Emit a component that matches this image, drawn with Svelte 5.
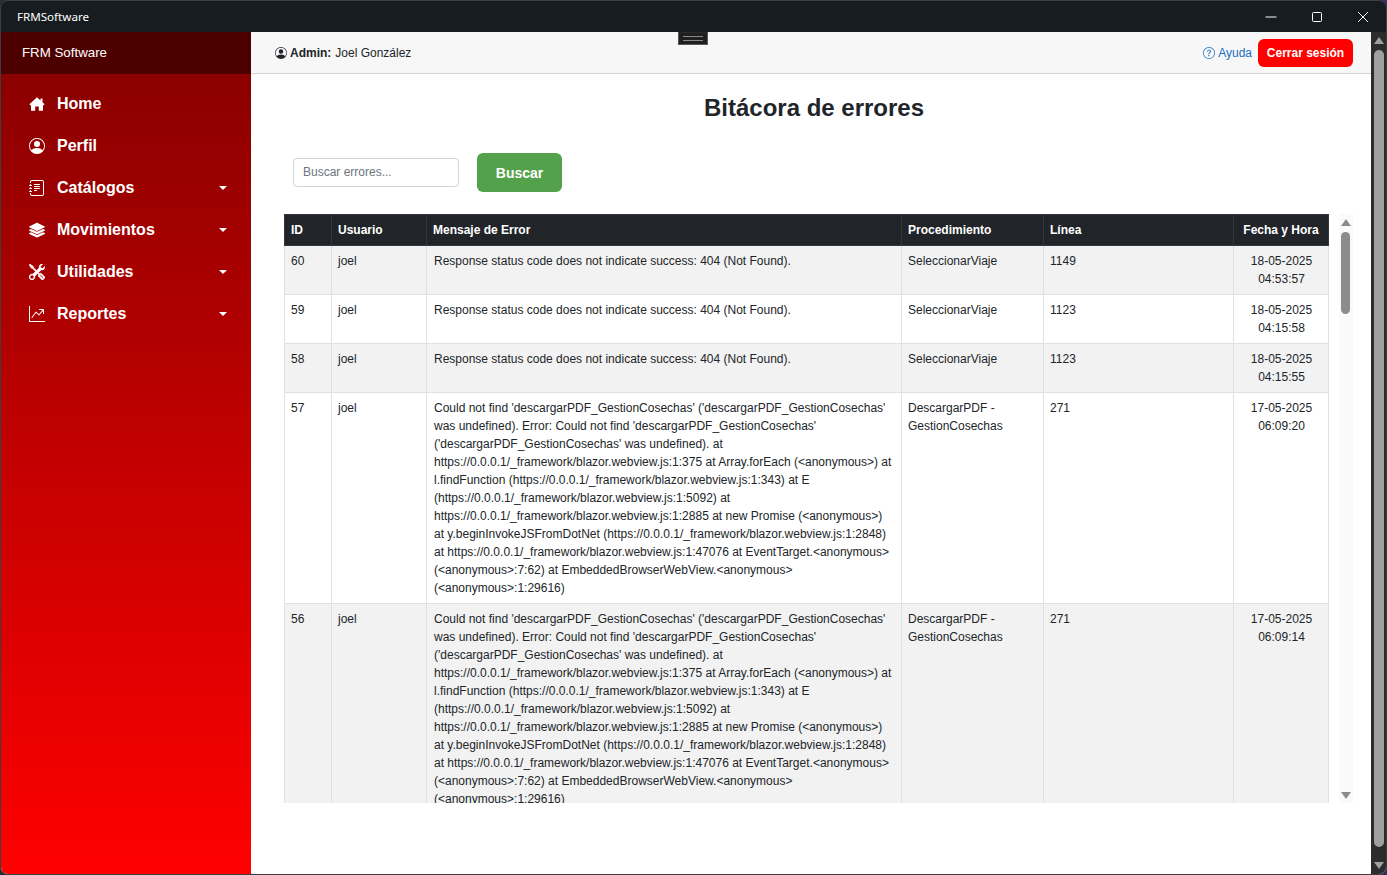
<script>
  const nav = [
    { label: 'Home', icon: 'home', caret: false },
    { label: 'Perfil', icon: 'person', caret: false },
    { label: 'Catálogos', icon: 'journal', caret: true },
    { label: 'Movimientos', icon: 'layers', caret: true },
    { label: 'Utilidades', icon: 'tools', caret: true },
    { label: 'Reportes', icon: 'graph', caret: true }
  ];
  const notFound = 'Response status code does not indicate success: 404 (Not Found).';
  const jsError = "Could not find 'descargarPDF_GestionCosechas' ('descargarPDF_GestionCosechas' was undefined). Error: Could not find 'descargarPDF_GestionCosechas' ('descargarPDF_GestionCosechas' was undefined). at https://0.0.0.1/_framework/blazor.webview.js:1:375 at Array.forEach (<anonymous>) at l.findFunction (https://0.0.0.1/_framework/blazor.webview.js:1:343) at E (https://0.0.0.1/_framework/blazor.webview.js:1:5092) at https://0.0.0.1/_framework/blazor.webview.js:1:2885 at new Promise (<anonymous>) at y.beginInvokeJSFromDotNet (https://0.0.0.1/_framework/blazor.webview.js:1:2848) at https://0.0.0.1/_framework/blazor.webview.js:1:47076 at EventTarget.<anonymous> (<anonymous>:7:62) at EmbeddedBrowserWebView.<anonymous> (<anonymous>:1:29616)";
  const rows = [
    { id: 60, user: 'joel', msg: notFound, proc: 'SeleccionarViaje', line: 1149, date: '18-05-2025', time: '04:53:57' },
    { id: 59, user: 'joel', msg: notFound, proc: 'SeleccionarViaje', line: 1123, date: '18-05-2025', time: '04:15:58' },
    { id: 58, user: 'joel', msg: notFound, proc: 'SeleccionarViaje', line: 1123, date: '18-05-2025', time: '04:15:55' },
    { id: 57, user: 'joel', msg: jsError, proc: 'DescargarPDF - GestionCosechas', line: 271, date: '17-05-2025', time: '06:09:20' },
    { id: 56, user: 'joel', msg: jsError, proc: 'DescargarPDF - GestionCosechas', line: 271, date: '17-05-2025', time: '06:09:14' }
  ];
</script>

{#snippet personIcon()}
  <path d="M11 6a3 3 0 1 1-6 0 3 3 0 0 1 6 0" />
  <path fill-rule="evenodd" d="M0 8a8 8 0 1 1 16 0A8 8 0 0 1 0 8m8-7a7 7 0 0 0-5.468 11.37C3.242 11.226 4.805 10 8 10s4.757 1.225 5.468 2.37A7 7 0 0 0 8 1" />
{/snippet}

<div class="window">
  <header class="titlebar">
    <span class="apptitle">FRMSoftware</span>
    <div class="controls">
      <span class="ctl"><svg width="12" height="12" viewBox="0 0 12 12"><path d="M0.5 6h11" stroke="#fff" /></svg></span>
      <span class="ctl"><svg width="12" height="12" viewBox="0 0 12 12"><rect x="1.5" y="1.5" width="9" height="9" rx="1" fill="none" stroke="#fff" /></svg></span>
      <span class="ctl"><svg width="12" height="12" viewBox="0 0 12 12"><path d="M1 1l10 10M11 1L1 11" stroke="#fff" /></svg></span>
    </div>
  </header>

  <div class="handle"><span></span></div>

  <div class="viewport">
    <aside class="sidebar">
      <div class="brand">FRM Software</div>
      <nav class="nav">
        {#each nav as item}
          <div class="navitem">
            <svg class="navicon" viewBox="0 0 16 16" fill="currentColor">
              {#if item.icon === 'home'}
                <path d="M8 1.2 11.5 4.4V2.5h2V6.3L15.6 8.2 14.3 9.5 14 9.2V14.8H9.8V10.5H6.2V14.8H2V9.2L1.7 9.5.4 8.2z" />
              {:else if item.icon === 'person'}
                {@render personIcon()}
              {:else if item.icon === 'journal'}
                <path d="M5 10.5a.5.5 0 0 1 .5-.5h2a.5.5 0 0 1 0 1h-2a.5.5 0 0 1-.5-.5m0-2a.5.5 0 0 1 .5-.5h5a.5.5 0 0 1 0 1h-5a.5.5 0 0 1-.5-.5m0-2a.5.5 0 0 1 .5-.5h5a.5.5 0 0 1 0 1h-5a.5.5 0 0 1-.5-.5m0-2a.5.5 0 0 1 .5-.5h5a.5.5 0 0 1 0 1h-5a.5.5 0 0 1-.5-.5" />
                <path d="M3 0h10a2 2 0 0 1 2 2v12a2 2 0 0 1-2 2H3a2 2 0 0 1-2-2v-1h1v1a1 1 0 0 0 1 1h10a1 1 0 0 0 1-1V2a1 1 0 0 0-1-1H3a1 1 0 0 0-1 1v1H1V2a2 2 0 0 1 2-2" />
                <path d="M1 5v-.5a.5.5 0 0 1 1 0V5h.5a.5.5 0 0 1 0 1h-2a.5.5 0 0 1 0-1zm0 3v-.5a.5.5 0 0 1 1 0V8h.5a.5.5 0 0 1 0 1h-2a.5.5 0 0 1 0-1zm0 3v-.5a.5.5 0 0 1 1 0v.5h.5a.5.5 0 0 1 0 1h-2a.5.5 0 0 1 0-1z" />
              {:else if item.icon === 'layers'}
                <path d="M7.765 .8a.5.5 0 0 1 .47 0l7.5 3.6a.5.5 0 0 1 0 .9l-7.5 3.6a.5.5 0 0 1-.47 0l-7.5-3.6a.5.5 0 0 1 0-.9z" />
                <path d="M2 6.9.265 7.75a.5.5 0 0 0 0 .9l7.5 3.6a.5.5 0 0 0 .47 0l7.5-3.6a.5.5 0 0 0 0-.9L14 6.9 8.6 9.5a1.4 1.4 0 0 1-1.2 0z" />
                <path d="M2 10.2.265 11.05a.5.5 0 0 0 0 .9l7.5 3.6a.5.5 0 0 0 .47 0l7.5-3.6a.5.5 0 0 0 0-.9L14 10.2l-5.4 2.6a1.4 1.4 0 0 1-1.2 0z" />
              {:else if item.icon === 'tools'}
                <path stroke="currentColor" stroke-width=".4" d="M1 0 0 1l2.2 3.081a1 1 0 0 0 .815.419h.07a1 1 0 0 1 .708.293l2.675 2.675-2.617 2.654A3.003 3.003 0 0 0 0 13a3 3 0 1 0 5.878-.851l2.654-2.617.968.968-.305.914a1 1 0 0 0 .242 1.023l3.27 3.27a.997.997 0 0 0 1.414 0l1.586-1.586a.997.997 0 0 0 0-1.414l-3.27-3.27a1 1 0 0 0-1.023-.242L10.5 9.5l-.96-.96 2.68-2.643A3.005 3.005 0 0 0 16 3q0-.405-.102-.777l-2.14 2.141L12 4l-.364-1.757L13.777.102a3 3 0 0 0-3.675 3.68L7.462 6.46 4.793 3.793a1 1 0 0 1-.293-.707v-.071a1 1 0 0 0-.419-.814zm9.646 10.646a.5.5 0 0 1 .708 0l2.914 2.915a.456.456 0 0 1-.645.645l-2.915-2.914a.5.5 0 0 1-.062-.646zM3 11l.471.242.529.026.287.445.445.287.026.529L5 13l-.242.471-.026.529-.445.287-.287.445-.529.026L3 15l-.471-.242L2 14.732l-.287-.445L1.268 14l-.026-.529L1 13l.242-.471.026-.529.445-.287.287-.445.529-.026z" />
              {:else}
                <path fill-rule="evenodd" d="M0 0h1v15h15v1H0zm10 3.5a.5.5 0 0 1 .5-.5h4a.5.5 0 0 1 .5.5v4a.5.5 0 0 1-1 0V4.9l-3.613 4.417a.5.5 0 0 1-.74.037L7.06 6.767l-3.656 5.027a.5.5 0 0 1-.808-.588l4-5.5a.5.5 0 0 1 .758-.06l2.609 2.61L13.445 4H10.5a.5.5 0 0 1-.5-.5" />
              {/if}
            </svg>
            <span class="navlabel">{item.label}</span>
            {#if item.caret}<span class="caret"></span>{/if}
          </div>
        {/each}
      </nav>
    </aside>

    <main class="main">
      <div class="topbar">
        <div class="who">
          <svg class="whoicon" viewBox="0 0 16 16" fill="currentColor">{@render personIcon()}</svg>
          <b>Admin:</b> <span class="whoname">Joel González</span>
        </div>
        <div class="actions">
          <a class="help" href="#ayuda">
            <svg class="helpicon" viewBox="0 0 16 16" fill="currentColor">
              <path d="M8 15A7 7 0 1 1 8 1a7 7 0 0 1 0 14m0 1A8 8 0 1 0 8 0a8 8 0 0 0 0 16" />
              <path d="M5.255 5.786a.237.237 0 0 0 .241.247h.825c.138 0 .248-.113.266-.25.09-.656.54-1.134 1.342-1.134.686 0 1.314.343 1.314 1.168 0 .635-.374.927-.965 1.371-.673.489-1.206 1.06-1.168 1.987l.003.217a.25.25 0 0 0 .25.246h.811a.25.25 0 0 0 .25-.25v-.105c0-.718.273-.927 1.01-1.486.609-.463 1.244-.977 1.244-2.056 0-1.511-1.276-2.241-2.673-2.241-1.267 0-2.655.59-2.75 2.286m1.557 5.763c0 .533.425.927 1.01.927.609 0 1.028-.394 1.028-.927 0-.552-.42-.94-1.029-.94-.584 0-1.009.388-1.009.94" />
            </svg>
            Ayuda
          </a>
          <button class="logout">Cerrar sesión</button>
        </div>
      </div>

      <div class="content">
        <h1 class="title">Bitácora de errores</h1>
        <div class="search">
          <input class="searchinput" placeholder="Buscar errores..." />
          <button class="searchbtn">Buscar</button>
        </div>
        <div class="tablewrap">
          <div class="tablescroll">
            <table class="grid">
              <colgroup>
                <col class="c-id" /><col class="c-user" /><col class="c-msg" /><col class="c-proc" /><col class="c-line" /><col class="c-date" />
              </colgroup>
              <thead>
                <tr>
                  <th>ID</th><th>Usuario</th><th>Mensaje de Error</th><th>Procedimiento</th><th>Línea</th><th class="center">Fecha y Hora</th>
                </tr>
              </thead>
              <tbody>
                {#each rows as r}
                  <tr>
                    <td>{r.id}</td>
                    <td>{r.user}</td>
                    <td class="msg">{r.msg}</td>
                    <td>{r.proc}</td>
                    <td>{r.line}</td>
                    <td class="center">{r.date}<br />{r.time}</td>
                  </tr>
                {/each}
              </tbody>
            </table>
          </div>
          <div class="vbar inner">
            <span class="up"></span>
            <span class="thumb"></span>
            <span class="down"></span>
          </div>
        </div>
      </div>
    </main>

    <div class="vbar outer">
      <span class="up"></span>
      <span class="thumb"></span>
      <span class="down"></span>
    </div>
  </div>
</div>

<style>
  :global(body) {
    margin: 0;
    background: linear-gradient(90deg, #2a2c2e 0 72%, #3c2a66 72% 100%);
    overflow: hidden;
  }
  .window {
    position: relative;
    box-sizing: border-box;
    height: 875px;
    width: 1387px;
    border: 1px solid #3c3e40;
    border-radius: 8px;
    overflow: hidden;
    display: flex;
    flex-direction: column;
    font-family: "Liberation Sans", Arial, sans-serif;
    color: #212529;
  }
  .titlebar {
    height: 31px;
    flex: none;
    background: #171c20;
    display: flex;
    align-items: center;
    justify-content: space-between;
    padding-left: 16px;
  }
  .apptitle {
    font-family: "Noto Sans", "Open Sans", sans-serif;
    font-size: 11.6px;
    color: #fff;
  }
  .controls {
    display: flex;
  }
  .ctl {
    width: 46px;
    height: 31px;
    display: flex;
    align-items: center;
    justify-content: center;
  }
  .handle {
    position: absolute;
    top: 31px;
    left: 677px;
    box-sizing: border-box;
    width: 30px;
    height: 13px;
    background: #1f1f1f;
    border: 1px solid #595959;
    border-top-color: #2a2a2a;
    display: flex;
    align-items: center;
    justify-content: center;
    z-index: 3;
  }
  .handle span {
    width: 20px;
    height: 3px;
    border-top: 1px solid #8a8a8a;
    border-bottom: 1px solid #8a8a8a;
  }
  .viewport {
    flex: 1;
    min-height: 0;
    display: flex;
    overflow: hidden;
    background: #fff;
  }
  .sidebar {
    flex: none;
    width: 250px;
    display: flex;
    flex-direction: column;
    color: #fff;
  }
  .brand {
    flex: none;
    box-sizing: border-box;
    height: 42px;
    display: flex;
    align-items: center;
    padding: 0 0 2px 21px;
    background: #4d0000;
    font-size: 13.3px;
  }
  .nav {
    flex: 1;
    padding-top: 9px;
    background: linear-gradient(180deg, #8b0000 0%, #ff0000 100%);
  }
  .navitem {
    height: 42px;
    display: flex;
    align-items: center;
    padding-left: 28px;
    font-size: 16px;
    font-weight: 700;
  }
  .navicon {
    width: 16px;
    height: 16px;
    flex: none;
  }
  .navlabel {
    margin-left: 12px;
    flex: 1;
  }
  .caret {
    width: 0;
    height: 0;
    margin-right: 24px;
    border-left: 4px solid transparent;
    border-right: 4px solid transparent;
    border-top: 4px solid #fff;
  }
  .main {
    flex: 1;
    min-width: 0;
  }
  .topbar {
    box-sizing: border-box;
    height: 42px;
    background: #f7f7f7;
    border-bottom: 1px solid #d6d5d5;
    display: flex;
    align-items: center;
    justify-content: space-between;
    padding: 0 18px 0 24px;
    font-size: 12px;
  }
  .who {
    display: flex;
    align-items: center;
    gap: 3px;
  }
  .whoname {
    margin-left: 1px;
  }
  .whoicon {
    width: 12px;
    height: 12px;
  }
  .actions {
    display: flex;
    align-items: center;
    gap: 6px;
  }
  .help {
    display: flex;
    align-items: center;
    gap: 3px;
    color: #1b6ec2;
    text-decoration: none;
  }
  .helpicon {
    width: 12px;
    height: 12px;
  }
  .logout {
    box-sizing: border-box;
    width: 95px;
    height: 28px;
    background: #ff0000;
    color: #fff;
    border: 0;
    border-radius: 6px;
    font: 700 12px "Liberation Sans", Arial, sans-serif;
  }
  .content {
    padding: 0 18px 0 33px;
  }
  .title {
    margin: 19px 9px 0 0;
    text-align: center;
    font-size: 24px;
    line-height: 29px;
    font-weight: 700;
  }
  .search {
    display: flex;
    align-items: center;
    gap: 18px;
    margin: 31px 0 22px 9px;
  }
  .searchinput {
    box-sizing: border-box;
    width: 166px;
    height: 29px;
    padding: 0 9px 2px;
    border: 1px solid #ced4da;
    border-radius: 4px;
    font: 12px "Liberation Sans", Arial, sans-serif;
    background: #fff;
  }
  .searchinput::placeholder {
    color: #6c757d;
  }
  .searchbtn {
    box-sizing: border-box;
    width: 85px;
    height: 39px;
    background: #54a14b;
    color: #fff;
    border: 0;
    border-radius: 6px;
    font: 700 14px "Liberation Sans", Arial, sans-serif;
  }
  .tablewrap {
    height: 589px;
    display: flex;
    gap: 10px;
  }
  .tablescroll {
    flex: 1;
    min-width: 0;
    overflow: hidden;
  }
  .vbar {
    flex: none;
    display: flex;
    flex-direction: column;
    align-items: center;
  }
  .vbar .up,
  .vbar .down {
    flex: none;
    width: 0;
    height: 0;
    border-left: 5px solid transparent;
    border-right: 5px solid transparent;
  }
  .vbar .thumb {
    flex: none;
    border-radius: 5px;
  }
  .inner {
    width: 14px;
    background: #fafafa;
    padding: 5px 1px 4px 0;
    box-sizing: border-box;
  }
  .inner .up {
    border-bottom: 7px solid #8c8c8c;
  }
  .inner .down {
    margin-top: auto;
    border-top: 7px solid #8c8c8c;
  }
  .inner .thumb {
    width: 9px;
    height: 82px;
    margin-top: 6px;
    background: #8c8c8c;
  }
  .outer {
    width: 15px;
    background: #2c2c2c;
    padding: 5px 0;
    box-sizing: border-box;
  }
  .outer .up {
    border-bottom: 7px solid #a0a0a0;
  }
  .outer .down {
    margin-top: auto;
    margin-bottom: 0;
    border-top: 7px solid #a0a0a0;
  }
  .outer .thumb {
    width: 10px;
    height: 797px;
    margin-top: 6px;
    background: #9f9f9f;
  }
  .grid {
    width: 1044px;
    table-layout: fixed;
    border-collapse: collapse;
    font-size: 12px;
    line-height: 18px;
  }
  .c-id { width: 47px; }
  .c-user { width: 95px; }
  .c-msg { width: 475px; }
  .c-proc { width: 142px; }
  .c-line { width: 190px; }
  .c-date { width: 95px; }
  th {
    height: 31px;
    box-sizing: border-box;
    padding: 6px;
    background: #212529;
    color: #fff;
    text-align: left;
    font-weight: 700;
    border: 1px solid #32383e;
  }
  td {
    padding: 6px;
    vertical-align: top;
    border: 1px solid #dee2e6;
    color: #212529;
    overflow-wrap: break-word;
  }
  td.msg {
    padding-left: 7px;
    padding-right: 7px;
  }
  td.center {
    padding-left: 7px;
  }
  tbody tr:nth-child(odd) td {
    background: #f2f2f2;
  }
  .center {
    text-align: center;
  }
</style>
